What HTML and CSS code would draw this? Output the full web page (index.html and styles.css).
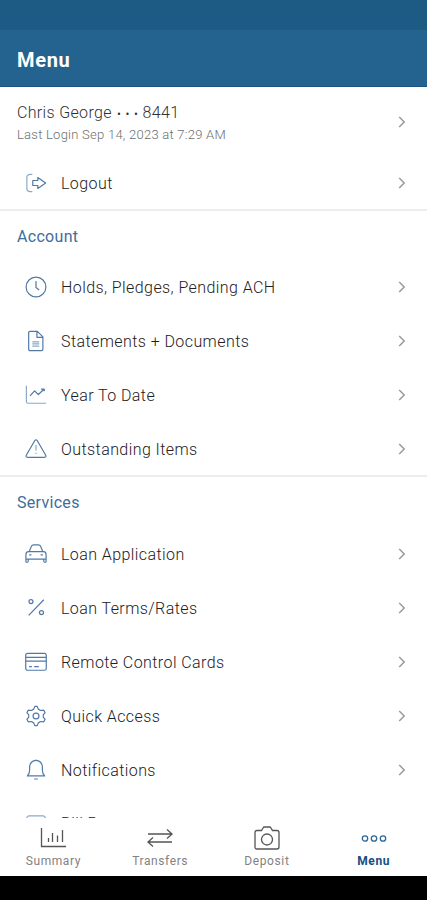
FILE: index.html
```html
<!DOCTYPE html>
<html lang="en">
<head>
<meta charset="utf-8">
<title>Menu</title>
<link rel="stylesheet" href="styles.css">
</head>
<body>
<svg class="defs" aria-hidden="true"><symbol id="chev" viewBox="0 0 8 12"><path d="M1.2 1l5 5-5 5"/></symbol></svg>
<div class="app">
  <div class="status"></div>
  <header class="header"><h1>Menu</h1></header>
  <main class="content">
    <section class="profile">
      <div class="user">
        <div><div class="name">Chris George <span class="dots">•••</span>8441</div><div class="last">Last Login Sep 14, 2023 at 7:29 AM</div></div>
        <svg class="chev"><use href="#chev"/></svg>
      </div>
      <div class="row"><svg class="ico" viewBox="0 0 24 24"><path class="soft" d="M8 2.5H5.5a3.5 3.5 0 0 0-3.500 3.500v12a3.500 3.500 0 0 0 3.500 3.500H8"/><path d="M8.500 9.300h5.500V6l8.500 6-8.500 6v-3.300H8.500z"/></svg><span class="label">Logout</span><svg class="chev"><use href="#chev"/></svg></div>
    </section>
    <section class="group">
      <h2>Account</h2>
      <div class="row"><svg class="ico" viewBox="0 0 24 24"><circle cx="12" cy="12" r="10.800"/><path d="M12 5.500v7l3.500 2.800"/></svg><span class="label">Holds, Pledges, Pending ACH</span><svg class="chev"><use href="#chev"/></svg></div>
      <div class="row"><svg class="ico" viewBox="0 0 24 24"><path d="M5.500 1.500h8l6 6V21a1.500 1.500 0 0 1-1.500 1.500H5.500A1.500 1.500 0 0 1 4 21V3a1.500 1.500 0 0 1 1.500-1.500zM13 1.500V8h6.500"/><path class="soft" d="M8 13h7.500M8 15.200h7.500M8 17.500h7.500"/></svg><span class="label">Statements + Documents</span><svg class="chev"><use href="#chev"/></svg></div>
      <div class="row"><svg class="ico" viewBox="0 0 24 24"><path class="soft" d="M1.500 2v17q0 2 2 2H23"/><path d="M5.500 13l5-5.500 4 4L20.500 6M17.500 5.500h3.500v2.500"/></svg><span class="label">Year To Date</span><svg class="chev"><use href="#chev"/></svg></div>
      <div class="row"><svg class="ico" viewBox="0 0 24 24"><path d="M10.700 2.800q1.300-1.800 2.600 0l9.300 16q.900 2.300-1.300 2.300H2.700q-2.200 0-1.300-2.300z"/><path class="soft" d="M12 7.500v6M12 16v1.500"/></svg><span class="label">Outstanding Items</span><svg class="chev"><use href="#chev"/></svg></div>
    </section>
    <section class="group services">
      <h2>Services</h2>
      <div class="row"><svg class="ico" viewBox="0 0 24 24"><path d="M4.500 9.500L7 3.500Q7.500 2 9.500 2h5q2 0 2.500 1.500l2.500 6M1 21v-8.500q0-3 3-3h16q3 0 3 3V21M1 17.500h22M3.500 20.500v-3M20.500 20.500v-3M1 21h2.500M20.500 21H23M4.500 13H7M17 13h2.500"/></svg><span class="label">Loan Application</span><svg class="chev"><use href="#chev"/></svg></div>
      <div class="row"><svg class="ico" viewBox="0 0 24 24"><path d="M20.500 3L4 20"/><circle cx="6.500" cy="5" r="2.200"/><circle cx="18" cy="17" r="2.200"/></svg><span class="label">Loan Terms/Rates</span><svg class="chev"><use href="#chev"/></svg></div>
      <div class="row"><svg class="ico" viewBox="0 0 24 24"><rect x=".800" y="2.500" width="22.400" height="18.500" rx="2"/><path d="M1 7h22M1 11h22M4.500 17h3M10 17h5"/></svg><span class="label">Remote Control Cards</span><svg class="chev"><use href="#chev"/></svg></div>
      <div class="row"><svg class="ico" viewBox="0 0 24 24"><path d="M9.500 4.500L10.700 1.500h2.600l1.200 3 2.600 1.500 3.200-.500 1.600 2.800-2 2.500v2.400l2 2.500-1.600 2.800-3.200-.500-2.600 1.500-1.200 3h-2.600l-1.200-3L6.900 18l-3.200.500-1.600-2.800 2-2.500v-2.400l-2-2.500 1.600-2.800 3.200.500z"/><circle cx="12" cy="12" r="3.200"/></svg><span class="label">Quick Access</span><svg class="chev"><use href="#chev"/></svg></div>
      <div class="row"><svg class="ico" viewBox="0 0 24 24"><path d="M2.500 18.500q2.500-2 2.500-6V8.500a7 7 0 0 1 14 0v4q0 4 2.500 6zM10 21.800h4M12 .500v1"/></svg><span class="label">Notifications</span><svg class="chev"><use href="#chev"/></svg></div>
      <div class="row last-row"><svg class="ico" viewBox="0 0 24 24"><rect class="soft" x="2" y="3.200" width="20" height="18" rx="2.500"/></svg><span class="label">Bill Pay</span><svg class="chev"><use href="#chev"/></svg></div>
    </section>
  </main>
  <nav class="tabs">
    <div class="tab"><svg viewBox="0 0 26 24"><path d="M1.500 2v18.500H26M8.500 12v4M12.500 7v9M17.500 9.500v6.500M22.500 4v12"/></svg><span>Summary</span></div>
    <div class="tab"><svg viewBox="0 0 26 24"><path d="M1 8h24M20 3.500L25 8l-5 4.500M25 16H1M6 11.500L1 16l5 4.500"/></svg><span>Transfers</span></div>
    <div class="tab"><svg viewBox="0 0 26 24"><path d="M3 4.500h4.500l1.500-2.500q.500-1 1.500-1h5q1 0 1.500 1l1.500 2.500H23q2 0 2 2V21q0 2-2 2H3q-2 0-2-2V6.500q0-2 2-2z"/><circle cx="13" cy="13.500" r="5.500"/></svg><span>Deposit</span></div>
    <div class="tab active"><svg viewBox="0 0 26 24"><circle cx="4" cy="12.500" r="2.700"/><circle cx="13" cy="12.500" r="2.700"/><circle cx="22" cy="12.500" r="2.700"/></svg><span>Menu</span></div>
  </nav>
  <div class="system"></div>
</div>
</body>
</html>
```
FILE: styles.css
```css
* { box-sizing: border-box; }
body { margin: 0; background: #fff; font-family: Roboto, "Liberation Sans", sans-serif; }
.defs { display: block; width: 0; height: 0; }
.app { display: flex; flex-direction: column; height: 900px; overflow: hidden; }
.status { height: 30px; flex: none; background: #1d5b85; }
.header { height: 57px; flex: none; display: flex; align-items: center; padding: 4px 17px 0; background: #24638f; border-bottom: 1px solid #1b527b; }
h1 { margin: 0; color: #fff; font-size: 20px; line-height: 26px; font-weight: 700; letter-spacing: .7px; }
.content { flex: 1; min-height: 0; overflow: hidden; }
.profile { height: 122px; }
.user { height: 69px; padding: 0 21px 0 17px; display: flex; align-items: center; justify-content: space-between; }
.name { color: #303133; font-size: 16px; line-height: 22px; font-weight: 300; letter-spacing: .34px; padding-top: 4px; }
.dots { letter-spacing: 4.6px; font-size: 12px; margin-left: 1px; }
.last { color: #6c6f72; font-size: 13px; line-height: 20px; font-weight: 300; letter-spacing: .25px; }
.row { height: 54px; display: flex; align-items: center; padding: 0 21px 0 25px; }
.ico { width: 22px; height: 22px; margin-right: 14px; flex: none; fill: none; stroke: #5179a5; stroke-width: 1.3; stroke-linejoin: round; }
.soft { opacity: .65; }
.label { flex: 1; color: #1e2022; font-size: 16px; line-height: 22px; font-weight: 300; letter-spacing: .42px; padding-top: 2px; }
.last-row .label { padding-top: 0; }
.chev { width: 8px; height: 12px; flex: none; fill: none; stroke: #999; stroke-width: 1.5; }
.group { height: 266px; border-top: 2px solid #ededee; }
h2 { margin: 0; height: 49px; padding: 15px 17px 0; color: #416d99; font-size: 16px; line-height: 22px; font-weight: 400; letter-spacing: .3px; }
.services h2 { height: 50px; }
.tabs { flex: none; height: 58px; display: flex; background: #fff; }
.tab { flex: 1; display: flex; flex-direction: column; align-items: center; padding-top: 8px; color: #828282; font-size: 12px; line-height: 16px; letter-spacing: .6px; }
.tab svg { width: 26px; height: 24px; margin-bottom: 3px; fill: none; stroke: #555; stroke-width: 1.3; }
.active { color: #174f82; font-weight: 700; }
.active svg { stroke: #2e6796; }
.system { flex: none; height: 24px; background: #000; }
```
